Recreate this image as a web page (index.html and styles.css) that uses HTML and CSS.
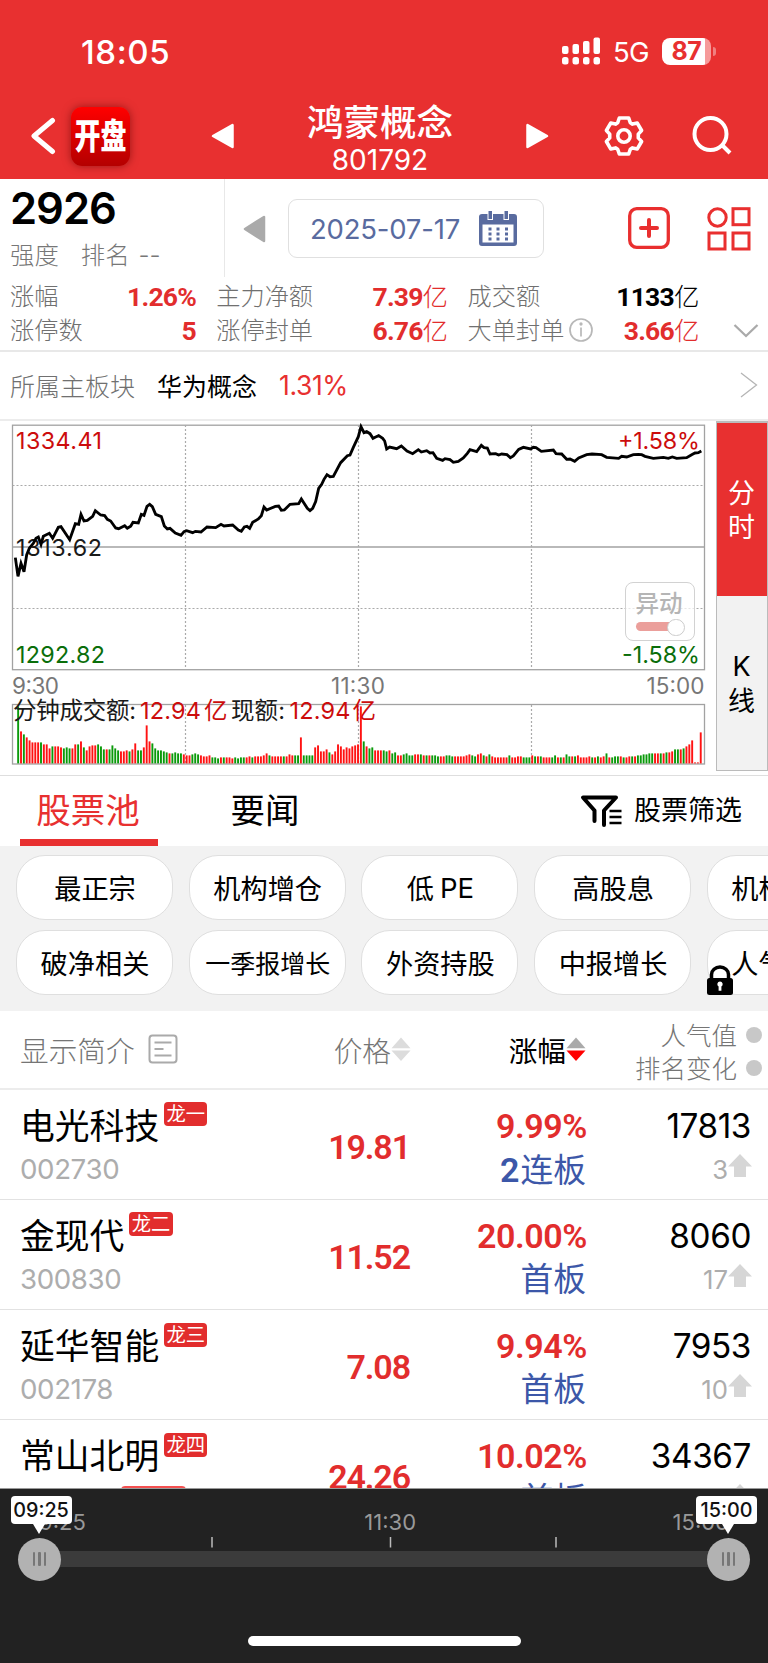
FILE: index.html
```html
<!DOCTYPE html>
<html lang="zh-CN">
<head>
<meta charset="utf-8">
<meta name="viewport" content="width=device-width">
<title>鸿蒙概念 801792</title>
<link rel="stylesheet" href="styles.css">
</head>
<body>
<div class="screen">
  <header class="top">
    <div class="status">
      <span class="clock">18:05</span>
      <svg class="signal" width="40" height="28" viewBox="0 0 40 28" fill="#fff">
        <rect x="1" y="9" width="6.5" height="8" rx="2"/><rect x="11.5" y="7" width="6.5" height="10" rx="2"/><rect x="22" y="4" width="6.5" height="13" rx="2"/><rect x="32.5" y="0.5" width="6.5" height="16.5" rx="2"/>
        <rect x="1" y="20" width="6.5" height="7.5" rx="2.5"/><rect x="11.5" y="20" width="6.5" height="7.5" rx="2.5"/><rect x="22" y="20" width="6.5" height="7.5" rx="2.5"/><rect x="32.5" y="20" width="6.5" height="7.5" rx="2.5"/>
      </svg>
      <span class="net">5G</span>
      <span class="battery"><b>87</b></span><i class="battery-cap"></i>
    </div>
    <nav class="nav">
      <svg class="back" width="26" height="40" viewBox="0 0 26 40"><path d="M21.5 4.500L3 20l18.500 15.500" fill="none" stroke="#fff" stroke-width="5" stroke-linecap="round" stroke-linejoin="round"/></svg>
      <span class="logo"><b>开盘</b></span>
      <svg class="prev" width="24" height="28" viewBox="0 0 24 28"><path d="M2 14L21.500 3v22z" fill="#fff" stroke="#fff" stroke-width="2.500" stroke-linejoin="round"/></svg>
      <div class="title"><strong>鸿蒙概念</strong><span>801792</span></div>
      <svg class="next" width="24" height="28" viewBox="0 0 24 28"><path d="M22 14L2.500 3v22z" fill="#fff" stroke="#fff" stroke-width="2.500" stroke-linejoin="round"/></svg>
      <svg class="gear" width="42" height="42" viewBox="0 0 42 42" fill="none" stroke="#fff" stroke-width="3.600" stroke-linejoin="round"><circle cx="21" cy="21" r="6.200"/><path d="M14.700 7.800L16.300 3h9.400l1.600 4.800 2.200 1.300 4.800-1 4.300 7.400-3.300 3.600v3.800l3.300 3.600-4.300 7.400-4.800-1-2.200 1.300-1.600 4.800h-9.400l-1.600-4.800-2.200-1.300-4.800 1-4.300-7.400 3.300-3.600v-3.800l-3.300-3.600 4.300-7.400 4.800 1z"/></svg>
      <svg class="search" width="42" height="42" viewBox="0 0 42 42" fill="none" stroke="#fff" stroke-width="4"><circle cx="18.500" cy="19" r="16"/><path d="M29.500 29.500l8.500 8.500"/></svg>
    </nav>
  </header>

  <section class="summary">
    <div class="strength">
      <b>2926</b>
      <p><span>强度</span><span>排名 <em>--</em></span></p>
    </div>
    <svg class="day-prev" width="24" height="30" viewBox="0 0 24 30"><path d="M2 15L21 3v24z" fill="#aaa" stroke="#aaa" stroke-width="2.500" stroke-linejoin="round"/></svg>
    <div class="date"><span>2025-07-17</span>
      <svg width="40" height="38" viewBox="0 0 40 38" fill="#596b9f"><path d="M4 5h32a3 3 0 0 1 3 3v26a3 3 0 0 1-3 3H4a3 3 0 0 1-3-3V8a3 3 0 0 1 3-3zM4.500 15.500v18h31v-18z" fill-rule="evenodd"/><g stroke="#fff" stroke-width="1"><rect x="10" y="1.500" width="4.500" height="9"/><rect x="26" y="1.500" width="4.500" height="9"/></g><path d="M10.500 18.500h3v3h-3zM18.500 18.500h3v3h-3zM27 18.500h3v3h-3zM10.500 23.500h3v3h-3zM18.500 23.500h3v3h-3zM27 23.500h3v3h-3zM10.500 28.500h3v3h-3zM18.500 28.500h3v3h-3zM27 28.500h3v3h-3z"/></svg>
    </div>
    <svg class="add" width="42" height="42" viewBox="0 0 42 42" fill="none" stroke="#e92f2f" stroke-width="3.300"><rect x="1.700" y="1.700" width="38.600" height="38.600" rx="7"/><path d="M21 13v16M13 21h16" stroke-width="4" stroke-linecap="round"/></svg>
    <svg class="apps" width="44" height="44" viewBox="0 0 44 44" fill="none" stroke="#e92f2f" stroke-width="3"><circle cx="10.500" cy="10.500" r="8.700"/><rect x="26" y="1.700" width="16" height="16"/><rect x="2" y="26" width="16" height="16"/><rect x="26" y="26" width="16" height="16"/></svg>
  </section>

  <section class="stats">
    <div class="stat"><span>涨幅</span><b class="red">1.26%</b></div>
    <div class="stat"><span>主力净额</span><b class="red">7.39<i>亿</i></b></div>
    <div class="stat"><span>成交额</span><b>1133<i>亿</i></b></div>
    <div></div>
    <div class="stat"><span>涨停数</span><b class="red">5</b></div>
    <div class="stat"><span>涨停封单</span><b class="red">6.76<i>亿</i></b></div>
    <div class="stat"><span>大单封单</span><svg class="info" width="26" height="26" viewBox="0 0 26 26" fill="none" stroke="#b8b8b8" stroke-width="1.700"><circle cx="13" cy="13" r="11"/><path d="M13 10.500v9"/><circle cx="13" cy="7" r=".8"/></svg><b class="red">3.66<i>亿</i></b></div>
    <svg class="expand" width="26" height="16" viewBox="0 0 26 16"><path d="M1.500 2L13 13 24.500 2" fill="none" stroke="#aaa" stroke-width="2.300"/></svg>
  </section>

  <section class="board">
    <span>所属主板块</span><strong>华为概念</strong><em>1.31%</em>
    <svg width="18" height="28" viewBox="0 0 18 28"><path d="M1 2l15.500 12L1 26" fill="none" stroke="#b5b5b5" stroke-width="1.300"/></svg>
  </section>

  <section class="chart">
    <svg class="plot" width="716" height="354" viewBox="0 0 716 354">
      <g fill="none" stroke="#a2a2a2" stroke-width="1.300">
        <rect x="12.500" y="5.200" width="692" height="244.500"/><path d="M12.500 127h692"/>
        <rect x="12.500" y="284.500" width="692" height="59.500"/>
        <g stroke="#aaa" stroke-width="1.200" stroke-dasharray="2 2"><path d="M12.500 65.500h692M12.500 188.500h692M185.500 5v244M358.500 5v244M531.500 5v244M185.500 285v59M358.500 285v59M531.500 285v59"/></g>
      </g>
      <g class="axis">
        <text x="16" y="29" textLength="86" class="up">1334.41</text>
        <text x="16" y="136" textLength="86">1313.62</text>
        <text x="16" y="243" textLength="89" class="down">1292.82</text>
        <text x="618" y="29" textLength="82" class="up">+1.58%</text>
        <text x="622" y="243" textLength="78" class="down">-1.58%</text>
        <g class="times">
          <text x="12" y="273.500" textLength="47">9:30</text>
          <text x="331" y="273.500" textLength="54">11:30</text>
          <text x="646.500" y="273.500" textLength="58">15:00</text>
        </g>
      </g>
      <g id="volume"></g>
      <g class="axis vol">
        <text x="13" y="298.500" textLength="123">分钟成交额:</text>
        <text x="140" y="298.500" textLength="61" class="up">12.94</text><text x="204" y="298.500" class="up">亿</text>
        <text x="231" y="298.500" textLength="54">现额:</text>
        <text x="289.500" y="298.500" textLength="61" class="up">12.94</text><text x="352.500" y="298.500" class="up">亿</text>
      </g>
      <polyline transform="translate(0 -5) scale(.33333)" fill="none" stroke="#000" stroke-width="8.500" points="46,428 54,484 63,445 72,470 80,420 88,400 100,385 108,370 115,366 123,388 130,364 148,355 158,370 175,337 183,335 209,374 226,326 236,328 243,298 252,318 262,316 278,304 286,287 302,300 314,302 322,313 332,318 347,339 356,341 374,332 382,340 392,334 399,322 415,324 424,298 432,301 441,274 449,268 457,275 467,298 484,305 493,333 502,342 510,340 526,354 543,361 552,350 560,347 578,353 586,349 603,351 621,336 647,338 663,328 672,333 698,330 715,345 724,349 733,336 741,334 749,340 758,322 775,312 784,302 792,276 800,285 826,274 836,273 844,286 853,285 870,268 896,266 904,252 922,280 930,287 938,280 947,260 956,220 965,208 972,193 981,179 990,185 1000,184 1022,143 1042,122 1050,120 1060,97 1075,65 1083,35 1092,53 1100,50 1110,56 1119,70 1127,66 1136,62 1148,70 1154,78 1160,102 1169,96 1190,101 1204,93 1221,108 1238,116 1255,104 1264,111 1280,107 1290,114 1299,113 1310,130 1328,136 1335,131 1350,134 1360,142 1375,139 1390,129 1402,115 1410,104 1430,110 1444,91 1452,98 1462,99 1470,117 1487,116 1496,120 1505,117 1521,119 1531,128 1540,123 1556,103 1570,97 1592,102 1600,97 1608,98 1624,109 1660,105 1668,116 1685,117 1700,133 1710,132 1724,139 1736,129 1760,119 1776,117 1805,119 1820,127 1856,130 1865,124 1880,126 1900,119 1915,118 1925,119 1935,124 1960,130 1990,127 2005,130 2017,126 2030,130 2060,128 2075,119 2085,114 2095,113 2104,108"/>
    </svg>
    <div class="moves"><b>异动</b><i></i></div>
    <div class="period"><span class="on">分<br>时</span><span>K<br>线</span></div>
  </section>

  <nav class="tabs">
    <span class="tab on">股票池</span><span class="tab">要闻</span>
    <span class="filter">
      <svg width="42" height="34" viewBox="0 0 42 34" fill="none" stroke="#000" stroke-width="4" stroke-linecap="round" stroke-linejoin="round"><path d="M14.500 27V16.500L3 3.500h33L24 16.500V31"/><path d="M29.500 17h12M29.500 23h12M29.500 29h12" stroke-width="2.600" stroke-linecap="butt"/></svg>
      股票筛选
    </span>
  </nav>

  <section class="chips">
    <span>最正宗</span><span>机构增仓</span><span>低<u>PE</u></span><span>高股息</span><span>机构重仓</span>
    <span>破净相关</span><span class="small">一季报增长</span><span>外资持股</span><span>中报增长</span>
    <span class="locked">人气龙头
      <svg width="28" height="30" viewBox="0 0 28 30"><path d="M5.500 14V9.500a8.500 7.500 0 0 1 17 0V14" fill="none" stroke="#000" stroke-width="3.500"/><rect x="1" y="13" width="26" height="17" rx="2.500"/><path d="M14 16.500a2.700 2.700 0 0 1 1.400 5v4.200h-2.800v-4.200a2.700 2.700 0 0 1 1.400-5z" fill="#fff"/></svg>
    </span>
  </section>

  <section class="thead">
    <div class="h-name">显示简介<svg width="30" height="30" viewBox="0 0 30 30" fill="none" stroke="#aaa" stroke-width="2"><rect x="1.500" y="1.500" width="27" height="27" rx="3"/><path d="M6.500 8.500h17M6.500 15h9M6.500 21.500h17"/></svg></div>
    <div class="h-col">价格<svg width="20" height="24" viewBox="0 0 20 24" fill="#dcdcdc"><path d="M.5 11.300L10 .5l9.500 10.800zM.5 13.500h19L10 24z"/></svg></div>
    <div class="h-col active">涨幅<svg width="20" height="24" viewBox="0 0 20 24"><path d="M.5 11.300L10 .5l9.500 10.800z" fill="#aaa"/><path d="M.5 13.500h19L10 24z" fill="#f00"/></svg></div>
    <div class="h-pop"><p>人气值<i></i></p><p>排名变化<i></i></p></div>
  </section>

  <section class="rows">
    <article class="row">
      <div class="stock"><p>电光科技<i>龙一</i></p><small>002730</small></div>
      <div class="price">19.81</div>
      <div class="chg"><b>9.99%</b><p><b>2</b>连板</p></div>
      <div class="pop"><b>17813</b><p>3<svg width="24" height="24" viewBox="0 0 24 24"><path d="M12 0l12 12.500h-6V23H6V12.500H0z"/></svg></p></div>
    </article>
    <article class="row">
      <div class="stock"><p>金现代<i>龙二</i></p><small>300830</small></div>
      <div class="price">11.52</div>
      <div class="chg"><b>20.00%</b><p>首板</p></div>
      <div class="pop"><b>8060</b><p>17<svg width="24" height="24" viewBox="0 0 24 24"><path d="M12 0l12 12.500h-6V23H6V12.500H0z"/></svg></p></div>
    </article>
    <article class="row">
      <div class="stock"><p>延华智能<i>龙三</i></p><small>002178</small></div>
      <div class="price">7.08</div>
      <div class="chg"><b>9.94%</b><p>首板</p></div>
      <div class="pop"><b>7953</b><p>10<svg width="24" height="24" viewBox="0 0 24 24"><path d="M12 0l12 12.500h-6V23H6V12.500H0z"/></svg></p></div>
    </article>
    <article class="row">
      <div class="stock"><p>常山北明<i>龙四</i></p><small>000158<q></q></small></div>
      <div class="price">24.26</div>
      <div class="chg"><b>10.02%</b><p>首板</p></div>
      <div class="pop"><b>34367</b><p>5<svg width="24" height="24" viewBox="0 0 24 24"><path d="M12 0l12 12.500h-6V23H6V12.500H0z"/></svg></p></div>
    </article>
  </section>

  <footer class="player">
    <div class="labels"><span>9:25</span><span>11:30</span><span>15:00</span></div>
    <svg class="ticks" width="768" height="11" viewBox="0 0 768 11"><path d="M212 0v10.500M390.500 0v10.500M556 0v10.500" stroke="#bbb" stroke-width="1.500"/></svg>
    <div class="track">
      <div class="knob"><b>09:25</b><i></i><i></i><i></i></div>
      <div class="knob"><b>15:00</b><i></i><i></i><i></i></div>
    </div>
    <div class="home"></div>
  </footer>
</div>
<script src="volume.js"></script>
</body>
</html>
```
FILE: volume.js
```js
// Minute turnover: r = rising, g = falling, followed by the bar height in px.
const turnover = `g57 r32 g29 r26 r23 r21 r21 r21 g21 r19 r19 r15 g17 r17 r17 r16 g15 g16 g15 r15
r19 g19 r22 g16 r13 r17 r18 r18 g19 g17 g14 r14 g14 g18 g15 g13 r12 r12 r13 g12
r14 r20 g13 g13 r16 r38 r22 g20 g15 g13 g13 g12 g11 r10 g10 g11 g10 g10 r9 r8
r8 g9 g10 g9 r8 r7 r7 r8 g6 g6 g5 r6 g6 r6 r6 r5 g6 g5 g6 g6
r6 r7 g6 r7 r7 r7 r8 r10 g8 r7 r7 r7 r7 g7 r7 r9 r8 g8 g8 r26
g8 g8 g8 g8 r16 r18 r12 r12 r14 g11 r9 r12 r19 r17 r14 r16 r15 r17 r18 r19
r57 g22 r17 g15 g16 r13 r13 r13 g13 g12 r13 g10 g11 r8 r8 g9 g10 g8 g8 r9
r9 g9 r8 g8 r8 g8 g8 g7 r7 r7 g8 g8 g7 r7 r7 r7 r7 r8 r9 g8
g7 r9 r10 g8 r7 g9 r7 r6 r6 r6 r6 r6 g8 r6 r6 r7 r7 g6 g6 g6
r8 g7 r7 g7 r6 r6 r6 g6 g8 r6 g6 r6 g9 g7 r7 g7 r8 r6 r6 r6
r7 g6 r6 g7 r6 r7 g10 r6 g6 g7 g7 r7 g6 r6 r7 g7 r7 g8 g8 g9
g9 g10 g10 r10 r10 g10 r10 g11 r11 r12 g14 g14 r14 g15 r17 r19 r23 r1 r1 r31`.split(/\s+/);

const layer = document.getElementById('volume');
turnover.forEach((bar, i) => {
  const height = Number(bar.slice(1));
  const rect = document.createElementNS('http://www.w3.org/2000/svg', 'rect');
  rect.setAttribute('x', (17.2 + i * 2.856).toFixed(2));
  rect.setAttribute('y', 343.4 - height);
  rect.setAttribute('width', 1.9);
  rect.setAttribute('height', height);
  rect.setAttribute('fill', bar[0] === 'r' ? '#ff1212' : '#0a9a0a');
  layer.appendChild(rect);
});
```
FILE: styles.css
```css
* { box-sizing: border-box; margin: 0; padding: 0; }
i, em { font-style: normal; }
u { text-decoration: none; }
svg { display: block; flex: none; }
body { font-family: Inter, "Noto Sans CJK SC", sans-serif; background: #fff; color: #000; }
.screen { width: 768px; height: 1663px; overflow: hidden; display: flex; flex-direction: column; white-space: nowrap; }
.screen > * { flex: none; }

.top { height: 179px; background: #e83030; color: #fff; }
.status { display: flex; align-items: center; height: 66px; padding: 36px 0 0 81px; }
.clock { width: 480px; padding-top: 1px; font-size: 33px; font-weight: 500; line-height: 32px; letter-spacing: .6px; }
.net { width: 61px; padding: 1px 0 0 12px; font-size: 27.500px; letter-spacing: -.7px; }
.battery { width: 49px; height: 27px; border-radius: 8px; background: linear-gradient(90deg, #fff 43px, #f69a9a 43px); color: #e83030; display: flex; justify-content: center; align-items: center; }
.battery b { font-size: 25px; font-weight: 700; letter-spacing: -.3px; line-height: 27px; }
.battery-cap { width: 3px; height: 9px; margin-left: 2px; border-radius: 0 4px 4px 0; background: #f08080; }
.nav { display: flex; align-items: center; height: 66px; margin-top: 37px; padding-left: 31px; }
.logo { width: 59px; height: 59px; margin-left: 14px; border-radius: 11px; background: linear-gradient(#f00, #b40000); box-shadow: 0 0 9px rgba(90, 0, 0, .55); display: flex; align-items: center; justify-content: center; }
.logo b { font-size: 26px; font-weight: 900; line-height: 32px; padding-top: 1px; transform: scaleY(1.35); }
.prev { margin-left: 81px; }
.title { width: 160px; margin: 9px 0 0 65px; display: flex; flex-direction: column; align-items: center; }
.title strong { font-size: 36.500px; font-weight: 500; line-height: 39px; }
.title span { font-size: 28px; line-height: 34px; }
.next { margin-left: 65px; }
.gear { margin-left: 54px; }
.search { margin-left: 47px; }

.summary { display: flex; height: 98px; }
.strength { width: 225px; height: 98px; padding: 8px 0 0 10px; border-right: 1.500px solid #e8e8e8; }
.strength b { display: block; font-size: 43.500px; font-weight: 600; line-height: 42px; letter-spacing: -1px; }
.strength p { display: flex; gap: 22px; margin-top: 10px; font-size: 24.400px; line-height: 32px; color: #777; font-weight: 300; }
.strength em { margin-left: 2px; }
.day-prev { margin: 34.500px 0 0 18px; }
.date { display: flex; align-items: center; width: 256px; height: 59.500px; margin: 19.500px 0 0 21px; padding-left: 21px; border: 1.500px solid #e0e0e0; border-radius: 9px; font-size: 27.500px; color: #596b9f; }
.date span { width: 168px; padding-top: 1px; letter-spacing: -.2px; }
.add { margin: 28px 0 0 84px; }
.apps { margin: 27.500px 0 0 36.500px; }

.stats { display: grid; grid-template-columns: 186px 231px 231px 60px; column-gap: 20.300px; grid-template-rows: 34.500px 34.500px; height: 74.500px; padding: 2.500px 0 0 10px; border-bottom: 2px solid #e8e8e8; }
.stat { display: flex; align-items: center; font-size: 24.200px; line-height: 34px; color: #707070; font-weight: 300; }
.stat b { margin-left: auto; font-family: Roboto, "Noto Sans CJK SC", sans-serif; font-size: 26.500px; font-weight: 700; color: #000; letter-spacing: -.8px; }
.stat b i { font-weight: 300; font-size: 25.500px; }
.stat b.red { color: #e22d2d; }
.info { margin: -2px 0 0 4px; }
.expand { margin: 9px 0 0 14px; }

.board { display: flex; align-items: center; height: 69px; padding-left: 10px; border-bottom: 2px solid #ececec; font-size: 25px; font-weight: 300; color: #707070; }
.board strong { margin-left: 22px; font-weight: 400; color: #000; }
.board em { margin-left: 22px; font-size: 26.500px; font-weight: 400; color: #e83030; letter-spacing: -.4px; }
.board svg { margin-left: auto; margin-right: 10px; }

.chart { position: relative; display: flex; height: 355px; border-bottom: 1.500px solid #dedede; }
.plot { margin-top: -1px; }
.axis { font-size: 23.300px; fill: #1a1a1a; }
.up { fill: #cc0c0c; }
.down { fill: #0a6e0a; }
.times { font-size: 22.500px; fill: #777; }
.vol { font-size: 23.500px; }
.moves { position: absolute; left: 624.500px; top: 161.500px; width: 70.500px; height: 59px; border: 1.500px solid #d2d2d2; border-radius: 8px; background: rgba(255, 255, 255, .7); padding: 4px 10px; }
.moves b { display: block; font-size: 23.500px; font-weight: 500; line-height: 34px; color: #b5b5b5; }
.moves i { display: block; position: relative; width: 44px; height: 8.500px; margin-top: 1px; border-radius: 5px; background: #eb9f9b; }
.moves i::after { content: ""; position: absolute; right: -5px; top: -3.500px; width: 15.500px; height: 15.500px; border: 1.500px solid #ccc; border-radius: 50%; background: #fff; }
.period { width: 52px; height: 350.500px; border: 1.500px solid #bbb; border-top-width: 2px; font-size: 27px; line-height: 34.500px; text-align: center; }
.period span { display: flex; align-items: center; justify-content: center; height: 173.500px; padding: 4px 1px 0 0; background: #f2f2f2; }
.period .on { background: #e83030; color: #fff; }

.tabs { display: flex; height: 70px; padding-left: 20px; font-size: 34.500px; line-height: 70px; }
.tab { width: 138px; padding-right: 2px; text-align: center; }
.tab + .tab { margin-left: 39px; }
.tab.on { color: #e83030; border-bottom: 7px solid #e83030; }
.filter { display: flex; align-items: center; gap: 12px; margin-left: auto; padding-right: 26px; font-size: 27px; }

.chips { display: grid; grid-template-columns: repeat(5, 157px); gap: 10px 15.700px; height: 165px; padding: 9.500px 0 0 16px; background: #f2f2f2; grid-auto-rows: 65px; width: 768px; overflow: hidden; }
.chips span { position: relative; display: flex; align-items: center; justify-content: center; padding: 0 0 1px 1px; border: 1.500px solid #dfdfdf; border-radius: 29px; background: #fff; font-size: 27.200px; }
.chips u { margin: 1px 0 0 6px; font-size: 27.500px; }
.chips .small { font-size: 25px; }
.chips .locked svg { position: absolute; left: -2px; bottom: -1px; }

.thead { display: grid; grid-template-columns: 252px 159px 175px 182px; height: 79px; align-items: center; border-bottom: 2px solid #ececec; font-size: 28.700px; font-weight: 300; color: #757575; }
.h-name { display: flex; align-items: center; gap: 13px; padding-left: 20px; }
.h-col { display: flex; align-items: center; justify-content: flex-end; }
.h-col.active { color: #000; font-weight: 400; }
.h-pop { padding: 5px 6px 0 0; font-size: 25.500px; line-height: 33px; }
.h-pop p { display: flex; align-items: center; justify-content: flex-end; }
.h-pop i { width: 16px; height: 16px; margin-left: 9px; border-radius: 50%; background: #c8c8c8; }

.rows { height: 398.500px; overflow: hidden; }
.row { display: grid; grid-template-columns: 250px 160px 177px 165px; height: 110.250px; padding-top: 15px; border-bottom: 1.500px solid #e2e2e2; line-height: 43px; }
.stock { padding-left: 20px; }
.stock p { display: flex; align-items: center; font-size: 34.800px; }
.stock p i { height: 24px; margin: -24px 0 0 5px; padding: 0 2.300px; border-radius: 4px; background: #e22d2d; color: #fff; font-size: 19.300px; line-height: 24px; }
.stock small { display: flex; font-size: 27.700px; color: #adadad; letter-spacing: -.4px; }
.stock q { width: 65px; height: 28px; margin-left: 6px; margin-top: 8px; border: 2px solid #f45050; border-radius: 4px; }
.stock q::before, .stock q::after { content: none; }
.price { padding-top: 21px; text-align: right; font: 600 34px/43px Roboto, sans-serif; color: #e22d2d; letter-spacing: -1.100px; }
.chg { text-align: right; font-family: Roboto, "Noto Sans CJK SC", sans-serif; }
.chg > b { display: block; font-size: 34px; font-weight: 600; letter-spacing: -.4px; color: #e22d2d; }
.chg p { padding: 1px 1px 0 0; font-size: 32.800px; color: #3c57a8; }
.chg p b { font-size: 34px; font-weight: 600; margin-right: 1px; }
.pop { text-align: right; }
.pop b { display: block; font-size: 33.300px; font-weight: 400; letter-spacing: -.4px; padding-right: 1px; }
.pop p { display: flex; justify-content: flex-end; align-items: center; font-size: 25.700px; color: #adadad; }
.pop svg { margin-top: -7px; fill: #d6d6d6; }

.player { flex: 1 0 0; background: #222; border-top: 1px solid #999; padding-top: 20px; }
.labels { display: flex; justify-content: space-between; padding: 0 39px 0 39px; font-size: 22px; line-height: 26px; color: #999; }
.labels span:nth-child(2) { margin-left: 22px; }
.ticks { margin-top: 2px; }
.track { display: flex; align-items: center; justify-content: space-between; height: 16px; margin: 3px 18px 0; background: linear-gradient(#3b3b3b, #3b3b3b) center / 690px 16px no-repeat; }
.knob { position: relative; display: flex; align-items: center; justify-content: center; gap: 3px; width: 43px; height: 43px; border-radius: 50%; background: #b2b2b2; }
.knob i { width: 2.500px; height: 14px; border-radius: 1px; background: #777; }
.knob b { position: absolute; left: -7.500px; bottom: 56.500px; width: 61px; border-radius: 4px; background: #fff; font-size: 19.800px; font-weight: 500; line-height: 28px; text-align: center; color: #111; }
.knob:last-child b { left: auto; right: -7px; }
.knob b::after { content: ""; position: absolute; left: 22.500px; top: 27.500px; border: 6.500px solid transparent; border-top: 10px solid #fff; border-bottom: 0; }
.knob:last-child b::after { left: 25.500px; }
.home { width: 273px; height: 10px; margin: 69px auto 0; border-radius: 5px; background: #fff; }
```
